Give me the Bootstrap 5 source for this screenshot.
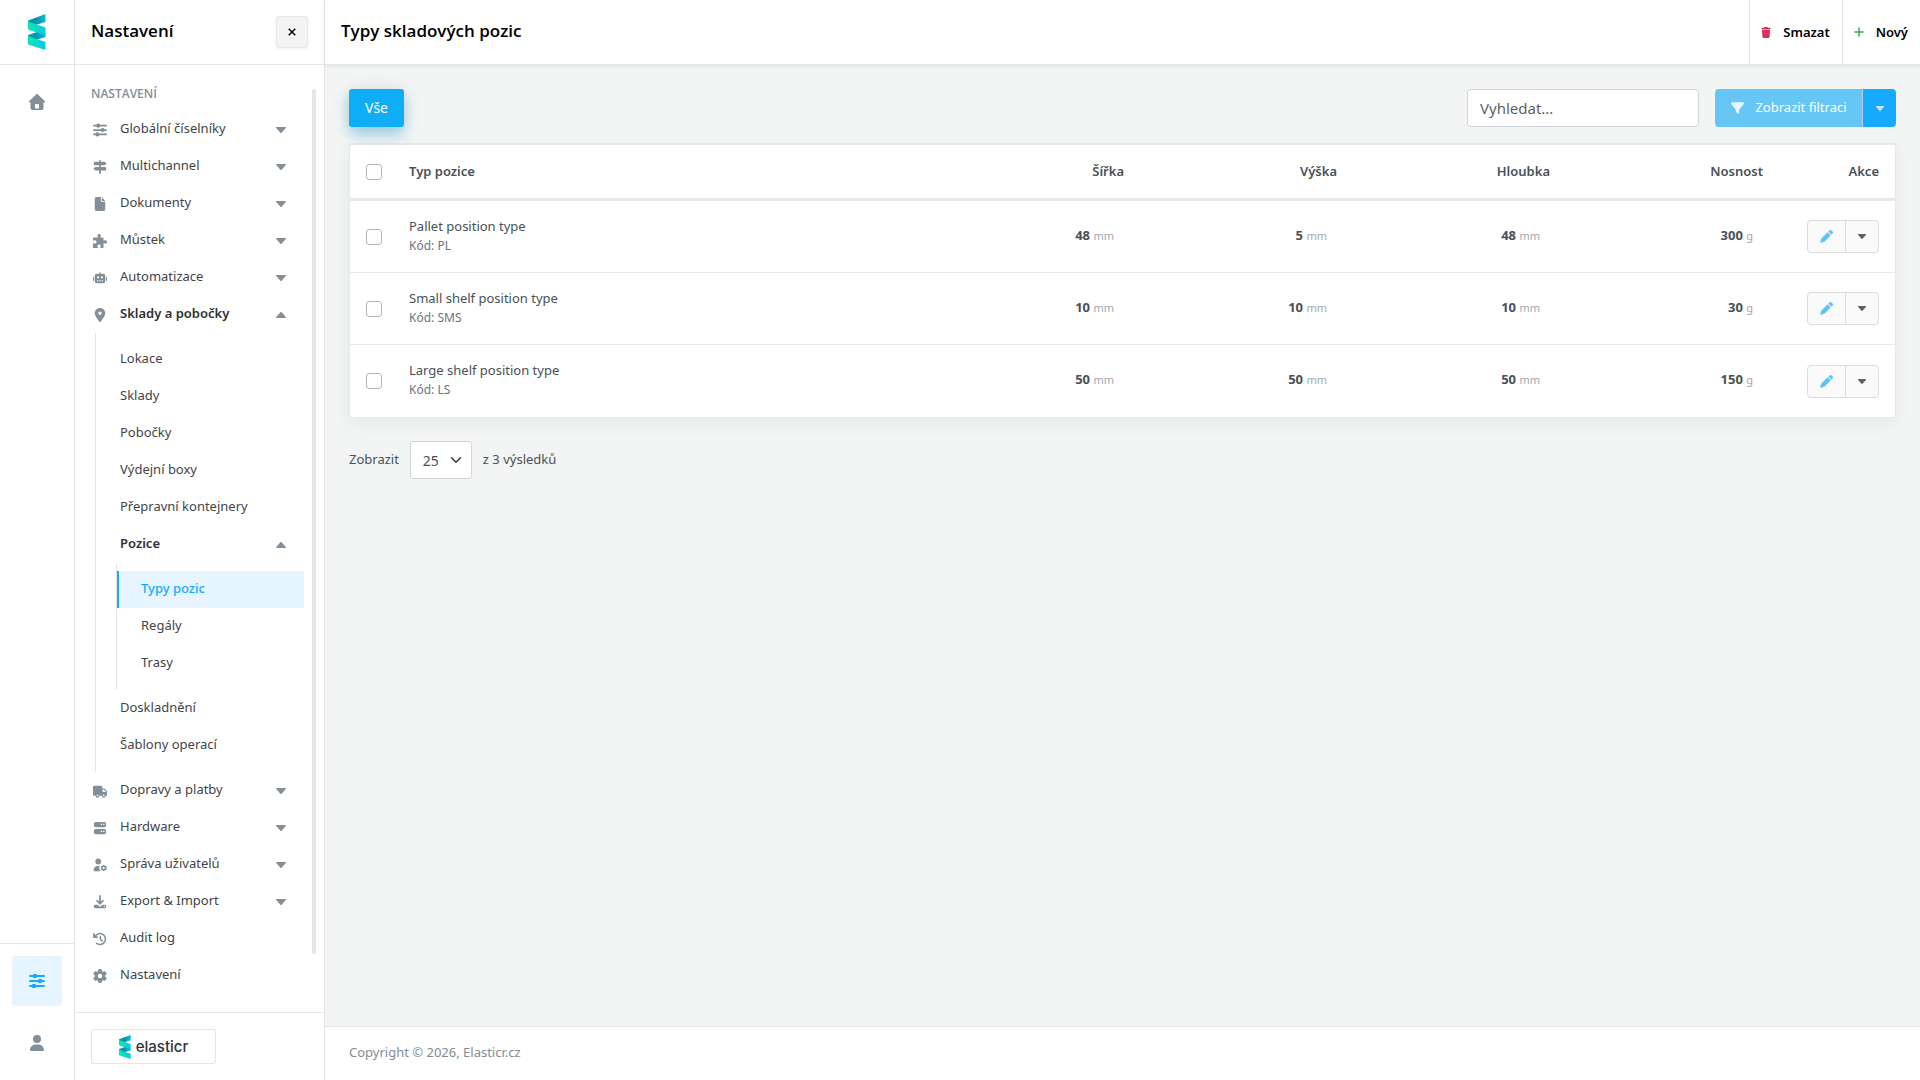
<!DOCTYPE html>
<html lang="cs">
<head>
<meta charset="utf-8">
<meta name="viewport" content="width=device-width, initial-scale=1">
<title>Typy skladových pozic</title>
<link href="https://cdn.jsdelivr.net/npm/bootstrap@5.3.0/dist/css/bootstrap.min.css" rel="stylesheet">
<style>
:root { --line: #e6e6e6; --icon: #828f99; --accent: #0fadf5; --soft: #e6f5ff; --ink: #3f444a; }
body { font-family: "Noto Sans", "Open Sans", sans-serif; font-size: 13px; line-height: 20px; color: #495057; background: #f3f5f4; }
a { text-decoration: none; color: inherit; }
svg { display: block; flex: none; }
.top-strip { height: 65px; flex: none; border-bottom: 1px solid var(--line); background: #fff; }
.top-title { font-family: "Open Sans", sans-serif; font-size: 17px; font-weight: 600; line-height: 24px; color: #000; margin: 0; padding-bottom: 3px; }
.rail { width: 75px; background: #fff; border-right: 1px solid var(--line); color: var(--icon); }
.rail-top { padding-top: 14px; }
.rail-link { width: 50px; height: 50px; border-radius: 3px; }
.rail-link.current { background: var(--soft); color: #16aaff; }
.rail-foot { border-top: 1px solid var(--line); height: 137px; }
.panel { width: 250px; background: #fff; border-right: 1px solid var(--line); }
.close-btn { width: 32px; height: 32px; padding: 0; background: #f4f4f4; border: 1px solid #e8e8e8; border-radius: 3px; box-shadow: 0 1px 3px rgba(0,0,0,.06); color: #000; }
.menu-head { font-family: "Open Sans", sans-serif; font-size: 12px; font-weight: 600; color: var(--icon); line-height: 20px; margin: 0; padding: 19px 0 7px 16px; }
.menu, .menu ul { list-style: none; margin: 0; padding: 0; }
.menu-row { display: flex; align-items: center; height: 37px; padding: 0 18px 3px 18px; color: var(--ink); }
.menu-row .ico { width: 14px; margin: 4px 13px 0 0; color: var(--icon); }
.menu-row .tri { margin: 4px 0 0 auto; color: var(--icon); }
.menu-row.open { font-weight: 600; color: #2c3136; }
.menu .sub-one { margin-left: 20px; padding: 8px 0; border-left: 1px solid var(--line); }
.sub-one .menu-row { padding-left: 24px; }
.menu .sub-two { margin-left: 20px; padding: 8px 0; border-left: 1px solid var(--line); }
.sub-two .menu-row.current { background: var(--soft); color: #16aaff; font-weight: 500; border-left: 2px solid #16aaff; padding-left: 22px; }
.scroll-thumb { width: 4px; background: var(--line); border-radius: 2px; margin: 24px 8px 58px 8px; }
.panel-foot { height: 68px; border-top: 1px solid var(--line); padding: 16px; }
.brand-box { width: 125px; height: 35px; border: 1px solid var(--line); border-radius: 2px; font-family: Inter, sans-serif; font-size: 15px; font-weight: 500; color: #2d333b; gap: 5px; }
.top-main { box-shadow: 0 1px 5px rgba(0,0,0,.08); padding-left: 16px; }
.top-action { border: 0; border-left: 1px solid var(--line); background: none; padding: 0 12px 0 11px; height: 64px; font-weight: 600; color: #000; gap: 12px; }
.work { padding: 24px; }
.btn-all { width: 55px; height: 38px; padding: 0; font-size: 14px; line-height: 20px; color: #fff; background: var(--accent); border: 0; border-radius: 3px; box-shadow: 0 0 20px rgba(8,10,12,.08), 0 8px 14px rgba(15,150,215,.35); }
.search-box { width: 232px; height: 38px; font-size: 15px; border-color: #ced4da; border-radius: 4px; }
.filter-group .btn { height: 38px; border: 0; border-radius: 4px; color: #fff; }
.filter-group .btn-main { width: 148px; padding: 0; font-size: 13px; background: #66c7f7; gap: 11px; }
.filter-group .btn-drop { width: 34px; padding: 0; background: #16aaff; border-left: 1px solid #b9cfdd; }
.btn-drop svg { opacity: .75; }
.grid-card { border: 1px solid #e6e9ec; border-top-width: 2px; border-bottom: 0; border-radius: 3px; box-shadow: 0 6px 18px rgba(8,10,12,.06); background: #fff; margin-top: 16px; }
.grid-card table { margin: 0; table-layout: fixed; border-collapse: separate; border-spacing: 0; --bs-table-bg: transparent; color: #495057; }
.grid-card th { height: 56px; padding: 0 16px; font-weight: 600; vertical-align: middle; border-bottom: 3px solid #e6e9ec; }
.grid-card th.label { padding-bottom: 2px; }
.grid-card td { height: 72px; padding: 0 16px; vertical-align: middle; border-bottom: 1px solid #e6e9ec; }
.grid-card tbody tr:last-child td { border-bottom: 0; }
.grid-card .form-check-input { width: 16px; height: 16px; margin: 0; display: block; border-color: #adb5bd; }
.col-check { width: 43px; }
.col-num { width: 213px; }
.col-act { width: 116px; }
.grid-card td.name { padding-bottom: 2px; }
.code { font-size: 12px; line-height: 20px; color: #6c757d; }
.grid-card td.num { padding-right: 26px; padding-bottom: 3px; font-weight: 700; }
.unit { font-size: 11px; font-weight: 400; color: #a3a8ad; }
.row-btns .btn { height: 33px; padding: 0; background: #fafafa; border-color: #dcdcdc; border-radius: 4px; }
.row-btns .btn-edit { width: 39px; color: #5cc3f7; }
.row-btns .btn-more { width: 34px; color: #5c6166; }
.pager { margin-top: 24px; gap: 11px; }
.pager label, .pager span { padding-bottom: 3px; }
.pager .form-select { width: 62px; height: 38px; padding: 0 0 0 12px; font-size: 14px; border-color: #ced4da; border-radius: 3px; color: #495057; background-position: right 8px center; background-size: 14px 12px; }
.page-foot { height: 54px; border-top: 1px solid var(--line); background: #fff; padding: 0 0 3px 24px; color: #828c95; }
</style>
<script src="https://cdn.jsdelivr.net/npm/bootstrap@5.3.0/dist/js/bootstrap.bundle.min.js" defer></script>
</head>
<body>
<svg width="0" height="0" class="position-absolute" aria-hidden="true">
  <defs>
    <linearGradient id="g-dark"><stop offset="0" stop-color="#0ba5b5"/><stop offset=".4" stop-color="#078fae"/><stop offset="1" stop-color="#0cb9dc"/></linearGradient>
    <linearGradient id="g-light"><stop offset="0" stop-color="#0de8ae"/><stop offset="1" stop-color="#0bc9e6"/></linearGradient>
    <symbol id="i-logo" viewBox="0 0 18 36">
      <path fill="url(#g-dark)" d="M0 6.500 17.500 0v8L6 11.500 0 9zM0 21 12 17l5.500 2.300v3.700L6 26.500 0 24z"/>
      <path fill="url(#g-light)" d="M0 7.500 17.500 13.500v8L0 15.500zM0 22 17.500 28v8L0 30.500z"/>
    </symbol>
    <symbol id="i-sliders" viewBox="0 0 16 16"><g fill="currentColor"><rect y="2" width="16" height="2" rx="1"/><rect y="7" width="16" height="2" rx="1"/><rect y="12" width="16" height="2" rx="1"/><circle cx="6" cy="3" r="2.300"/><circle cx="11" cy="8" r="2.300"/><circle cx="5" cy="13" r="2.300"/></g></symbol>
    <symbol id="i-sign" viewBox="0 0 16 16"><path fill="currentColor" d="M7 1a1 1 0 0 1 2 0v1h4.500L15.500 4l-2 2H2a1 1 0 0 1-1-1V3a1 1 0 0 1 1-1h5zM2.500 8H14a1 1 0 0 1 1 1v2a1 1 0 0 1-1 1H9v3a1 1 0 0 1-2 0v-3H2.500l-2-2zM7 6h2v2H7z"/></symbol>
    <symbol id="i-file" viewBox="0 0 16 16"><path fill="currentColor" d="M4 0h5v4.500a1 1 0 0 0 1 1h4V14a2 2 0 0 1-2 2H4a2 2 0 0 1-2-2V2a2 2 0 0 1 2-2zm6 0 4 4.500h-4z"/></symbol>
    <symbol id="i-puzzle" viewBox="0 0 16 16"><path fill="currentColor" d="M5.500 3.200C5 2.700 5 2.200 5 1.800 5 .8 5.900 0 7 0s2 .8 2 1.800c0 .5-.2.900-.5 1.300-.3.400-.1.900.4.900H11a1 1 0 0 1 1 1v2c0 .6.500.8 1 .5.300-.3.700-.5 1.200-.5 1 0 1.800.9 1.800 2s-.8 2-1.800 2c-.5 0-.9-.2-1.200-.5-.4-.3-1-.1-1 .5v4a1 1 0 0 1-1 1H9c-.6 0-.8-.5-.5-1 .3-.3.5-.7.500-1.200 0-1-.9-1.800-2-1.800s-2 .8-2 1.800c0 .5.200.9.500 1.200.3.500.1 1-.5 1H1a1 1 0 0 1-1-1v-4c0-.6.500-.8 1-.5.300.3.700.5 1.200.5 1 0 1.800-.9 1.800-2s-.8-2-1.800-2c-.5 0-.9.200-1.200.5-.5.300-1 .1-1-.5V5a1 1 0 0 1 1-1h4c.6 0 .8-.4.500-.8z"/></symbol>
    <symbol id="i-robot" viewBox="0 0 16 16"><path fill="currentColor" fill-rule="evenodd" d="M7.300 2a.7.700 0 0 1 1.400 0V3H11.500a2.500 2.500 0 0 1 2.500 2.500v6a2.500 2.500 0 0 1-2.500 2.500h-7A2.500 2.500 0 0 1 2 11.500v-6A2.500 2.500 0 0 1 4.500 3h2.800zM4.500 7.200a1.300 1.300 0 1 0 2.600 0 1.300 1.300 0 1 0-2.600 0zm4.400 0a1.300 1.300 0 1 0 2.600 0 1.300 1.300 0 1 0-2.600 0zM4.500 10.500v1.200h1.600v-1.200zm2.700 0v1.200h1.600v-1.200zm2.700 0v1.200h1.600v-1.200zM0 7.500A.6.600 0 0 1 1.200 7.500v3a.6.600 0 0 1-1.200 0zm14.800 0a.6.600 0 0 1 1.200 0v3a.6.600 0 0 1-1.200 0z"/></symbol>
    <symbol id="i-pin" viewBox="0 0 384 512"><path fill="currentColor" d="M215.700 499.200C267 435 384 279.400 384 192C384 86 298 0 192 0S0 86 0 192c0 87.400 117 243 168.300 307.200c12.300 15.300 35.100 15.300 47.400 0zM192 128a64 64 0 1 1 0 128 64 64 0 1 1 0-128z"/></symbol>
    <symbol id="i-truck" viewBox="0 0 16 16"><path fill="currentColor" fill-rule="evenodd" d="M1.500 2H9a1.500 1.500 0 0 1 1.500 1.500V5H12.300c.4 0 .8.200 1.100.4l2.200 2.200c.3.300.4.700.4 1.100V12.500a1 1 0 0 1-1 1h-.5a2.200 2.200 0 0 1-4.400 0H7.400a2.200 2.200 0 0 1-4.400 0H1.500A1.500 1.500 0 0 1 0 12V3.500A1.500 1.500 0 0 1 1.500 2zM11 6.300V9h3.500v-.4l-2.200-2.300zM4.300 13a.9.900 0 1 0 1.800 0 .9.900 0 1 0-1.800 0zm7.100 0a.9.900 0 1 0 1.800 0 .9.900 0 1 0-1.800 0z"/></symbol>
    <symbol id="i-server" viewBox="0 0 16 16"><path fill="currentColor" fill-rule="evenodd" d="M3 1h10a2 2 0 0 1 2 2v2a2 2 0 0 1-2 2H3a2 2 0 0 1-2-2V3a2 2 0 0 1 2-2zm6 2.200v1.500h1.500V3.200zm2.700 0v1.500h1.500V3.200zM3 9h10a2 2 0 0 1 2 2v2a2 2 0 0 1-2 2H3a2 2 0 0 1-2-2v-2a2 2 0 0 1 2-2zm6 2.200v1.500h1.500v-1.500zm2.700 0v1.500h1.500v-1.500z"/></symbol>
    <symbol id="i-gear" viewBox="0 0 512 512"><path fill="currentColor" d="M495.900 166.600c3.200 8.700 .5 18.400-6.400 24.600l-43.300 39.400c1.100 8.300 1.700 16.800 1.700 25.400s-.6 17.100-1.700 25.400l43.300 39.400c6.900 6.200 9.600 15.900 6.400 24.600c-4.400 11.900-9.700 23.300-15.800 34.300l-4.700 8.100c-6.600 11-14 21.400-22.100 31.200c-5.900 7.200-15.700 9.600-24.500 6.800l-55.700-17.700c-13.400 10.300-28.200 18.900-44 25.400l-12.500 57.100c-2 9.100-9 16.300-18.200 17.800c-13.800 2.300-28 3.500-42.500 3.500s-28.700-1.200-42.500-3.500c-9.200-1.500-16.200-8.700-18.200-17.800l-12.500-57.100c-15.800-6.500-30.600-15.100-44-25.400L83.100 425.900c-8.800 2.800-18.600 .3-24.500-6.800c-8.100-9.800-15.500-20.200-22.100-31.200l-4.700-8.100c-6.100-11-11.400-22.400-15.800-34.300c-3.200-8.700-.5-18.400 6.400-24.600l43.300-39.400C64.600 273.100 64 264.600 64 256s.6-17.100 1.700-25.400L22.400 191.200c-6.900-6.200-9.600-15.900-6.400-24.600c4.400-11.900 9.700-23.300 15.800-34.300l4.700-8.100c6.600-11 14-21.400 22.100-31.200c5.900-7.200 15.700-9.600 24.500-6.800l55.700 17.700c13.400-10.300 28.200-18.900 44-25.400l12.500-57.100c2-9.100 9-16.300 18.200-17.800C227.300 1.200 241.500 0 256 0s28.700 1.200 42.500 3.500c9.200 1.500 16.200 8.700 18.200 17.800l12.500 57.100c15.800 6.500 30.600 15.100 44 25.400l55.700-17.700c8.800-2.800 18.600-.3 24.500 6.800c8.100 9.800 15.500 20.200 22.100 31.200l4.700 8.100c6.100 11 11.400 22.400 15.800 34.300zM256 336a80 80 0 1 0 0-160 80 80 0 1 0 0 160z"/></symbol>
    <symbol id="i-usergear" viewBox="0 0 16 16"><g fill="currentColor"><circle cx="6" cy="4" r="3.300"/><path d="M5 9h2.500c-.5 1.500-.4 3.500 1 6H1.500a.8.800 0 0 1-.8-.8C.7 11 2.700 9 5 9z"/></g><use href="#i-gear" x="8.500" y="7.500" width="7.500" height="8"/></symbol>
    <symbol id="i-download" viewBox="0 0 16 16"><path fill="currentColor" fill-rule="evenodd" d="M7 1a1 1 0 0 1 2 0v6.600l2.300-2.300 1.400 1.400L8 11.400 3.300 6.700l1.400-1.400L7 7.600zM2.500 11h2.700L8 13.500 10.800 11h2.700A1.500 1.500 0 0 1 15 12.500v1a1.500 1.500 0 0 1-1.500 1.500h-11A1.500 1.500 0 0 1 1 13.500v-1A1.500 1.500 0 0 1 2.500 11zm9.800 1.400v1.300h1.300v-1.300z"/></symbol>
    <symbol id="i-history" viewBox="0 0 16 16"><g fill="none" stroke="currentColor" stroke-width="1.700" stroke-linecap="round" stroke-linejoin="round"><path d="M2.500 5.200A6.200 6.200 0 1 1 4 12.800"/><path d="M1 2v4h4" fill="currentColor"/><path d="M8.500 5v3.300l2 2"/></g></symbol>
    <symbol id="i-house" viewBox="0 0 16 16"><path fill="currentColor" fill-rule="evenodd" d="M7.300.3a1 1 0 0 1 1.400 0l7 6.700c.6.600.2 1.500-.6 1.500h-.6V14a2 2 0 0 1-2 2h-9a2 2 0 0 1-2-2V8.500H.9c-.8 0-1.200-.9-.6-1.500zM6 14.500h4V11a1 1 0 0 0-1-1H7a1 1 0 0 0-1 1z"/></symbol>
    <symbol id="i-user" viewBox="0 0 448 512"><path fill="currentColor" d="M224 256A128 128 0 1 0 224 0a128 128 0 1 0 0 256zm-45.700 48C79.800 304 0 383.800 0 482.300C0 498.700 13.300 512 29.700 512H418.300c16.400 0 29.700-13.300 29.700-29.700C448 383.800 368.200 304 269.700 304H178.300z"/></symbol>
    <symbol id="i-down" viewBox="0 0 10 6"><path fill="currentColor" d="M.6 0h8.800c.6 0 .8.600.4 1L5.600 5.700a.8.800 0 0 1-1.200 0L.2 1C-.2.600 0 0 .6 0z"/></symbol>
    <symbol id="i-up" viewBox="0 0 10 6"><path fill="currentColor" d="M.6 6h8.800c.6 0 .8-.6.400-1L5.600.3a.8.800 0 0 0-1.200 0L.2 5C-.2 5.400 0 6 .6 6z"/></symbol>
    <symbol id="i-filter" viewBox="0 0 512 512"><path fill="currentColor" d="M3.900 54.900C10.500 40.900 24.500 32 40 32H472c15.500 0 29.500 8.900 36.100 22.900s4.600 30.500-5.200 42.500L320 320.900V448c0 12.100-6.800 23.200-17.700 28.600s-23.800 4.300-33.500-3l-64-48c-8.100-6-12.800-15.500-12.800-25.600V320.900L9 97.300C-.7 85.400-2.800 68.800 3.900 54.900z"/></symbol>
    <symbol id="i-pencil" viewBox="0 0 16 16"><path fill="currentColor" d="M9.300 2.900l3.800 3.800-7.300 7.300c-.3.300-.6.500-1 .6L0 16l1.400-4.800c.1-.4.300-.7.600-1zM10.200 2l1.500-1.500a1.800 1.800 0 0 1 2.500 0l1.300 1.300a1.800 1.800 0 0 1 0 2.500L14 5.800z"/></symbol>
    <symbol id="i-trash" viewBox="0 0 10 11"><path fill="currentColor" d="M3.500 0h3l.5.700h2.500v1.200H.5V.7H3zM1 2.400h8l-.4 7.400c0 .7-.5 1.200-1.200 1.200H2.600c-.7 0-1.200-.5-1.200-1.200z"/></symbol>
  </defs>
</svg>

<div class="d-flex min-vh-100">
  <nav class="rail d-flex flex-column flex-shrink-0" aria-label="Hlavní">
    <a href="#" class="top-strip rail-top d-flex justify-content-center" aria-label="Elasticr"><svg width="18" height="36"><use href="#i-logo"/></svg></a>
    <div class="d-flex justify-content-center pt-2 mt-1">
      <a href="#" class="rail-link d-flex align-items-center justify-content-center" aria-label="Domů"><svg width="16" height="16"><use href="#i-house"/></svg></a>
    </div>
    <div class="rail-foot mt-auto d-flex flex-column align-items-center pt-2 gap-2">
      <a href="#" class="rail-link current d-flex align-items-center justify-content-center mt-1" aria-label="Nastavení"><svg width="16" height="16"><use href="#i-sliders"/></svg></a>
      <a href="#" class="rail-link d-flex align-items-center justify-content-center mt-1" aria-label="Uživatel"><svg width="14" height="16"><use href="#i-user"/></svg></a>
    </div>
  </nav>

  <aside class="panel d-flex flex-column flex-shrink-0">
    <div class="top-strip d-flex align-items-center justify-content-between px-3">
      <h2 class="top-title">Nastavení</h2>
      <button type="button" class="close-btn d-flex align-items-center justify-content-center" aria-label="Zavřít"><svg width="8" height="8" viewBox="0 0 8 8"><path d="M.7.7l6.600 6.600M7.300.7L.7 7.300" stroke="currentColor" stroke-width="1.400"/></svg></button>
    </div>
    <div class="d-flex flex-grow-1">
      <div class="flex-grow-1">
        <h3 class="menu-head">NASTAVENÍ</h3>
        <ul class="menu">
          <li><a href="#" class="menu-row"><svg class="ico" height="14"><use href="#i-sliders"/></svg>Globální číselníky<svg class="tri" width="10" height="6"><use href="#i-down"/></svg></a></li>
          <li><a href="#" class="menu-row"><svg class="ico" height="14"><use href="#i-sign"/></svg>Multichannel<svg class="tri" width="10" height="6"><use href="#i-down"/></svg></a></li>
          <li><a href="#" class="menu-row"><svg class="ico" height="14"><use href="#i-file"/></svg>Dokumenty<svg class="tri" width="10" height="6"><use href="#i-down"/></svg></a></li>
          <li><a href="#" class="menu-row"><svg class="ico" height="14"><use href="#i-puzzle"/></svg>Můstek<svg class="tri" width="10" height="6"><use href="#i-down"/></svg></a></li>
          <li><a href="#" class="menu-row"><svg class="ico" height="14"><use href="#i-robot"/></svg>Automatizace<svg class="tri" width="10" height="6"><use href="#i-down"/></svg></a></li>
          <li><a href="#" class="menu-row open"><svg class="ico" height="14"><use href="#i-pin"/></svg>Sklady a pobočky<svg class="tri" width="10" height="6"><use href="#i-up"/></svg></a>
            <ul class="sub-one">
              <li><a href="#" class="menu-row">Lokace</a></li>
              <li><a href="#" class="menu-row">Sklady</a></li>
              <li><a href="#" class="menu-row">Pobočky</a></li>
              <li><a href="#" class="menu-row">Výdejní boxy</a></li>
              <li><a href="#" class="menu-row">Přepravní kontejnery</a></li>
              <li><a href="#" class="menu-row open">Pozice<svg class="tri" width="10" height="6"><use href="#i-up"/></svg></a>
                <ul class="sub-two">
                  <li><a href="#" class="menu-row current" aria-current="page">Typy pozic</a></li>
                  <li><a href="#" class="menu-row">Regály</a></li>
                  <li><a href="#" class="menu-row">Trasy</a></li>
                </ul>
              </li>
              <li><a href="#" class="menu-row">Doskladnění</a></li>
              <li><a href="#" class="menu-row">Šablony operací</a></li>
            </ul>
          </li>
          <li><a href="#" class="menu-row"><svg class="ico" height="14"><use href="#i-truck"/></svg>Dopravy a platby<svg class="tri" width="10" height="6"><use href="#i-down"/></svg></a></li>
          <li><a href="#" class="menu-row"><svg class="ico" height="14"><use href="#i-server"/></svg>Hardware<svg class="tri" width="10" height="6"><use href="#i-down"/></svg></a></li>
          <li><a href="#" class="menu-row"><svg class="ico" height="14"><use href="#i-usergear"/></svg>Správa uživatelů<svg class="tri" width="10" height="6"><use href="#i-down"/></svg></a></li>
          <li><a href="#" class="menu-row"><svg class="ico" height="14"><use href="#i-download"/></svg>Export &amp; Import<svg class="tri" width="10" height="6"><use href="#i-down"/></svg></a></li>
          <li><a href="#" class="menu-row"><svg class="ico" height="14"><use href="#i-history"/></svg>Audit log</a></li>
          <li><a href="#" class="menu-row"><svg class="ico" height="14"><use href="#i-gear"/></svg>Nastavení</a></li>
        </ul>
      </div>
      <div class="scroll-thumb flex-shrink-0"></div>
    </div>
    <div class="panel-foot">
      <a href="#" class="brand-box d-flex align-items-center justify-content-center"><svg width="12" height="24"><use href="#i-logo"/></svg><span>elasticr</span></a>
    </div>
  </aside>

  <div class="d-flex flex-column flex-grow-1">
    <header class="top-strip top-main d-flex align-items-center">
      <h1 class="top-title me-auto">Typy skladových pozic</h1>
      <button type="button" class="top-action d-flex align-items-center"><svg width="10" height="11" color="#dc3058"><use href="#i-trash"/></svg>Smazat</button>
      <button type="button" class="top-action d-flex align-items-center"><svg width="10" height="10" viewBox="0 0 10 10" color="#3fa648"><path d="M5 .5v9M.5 5h9" stroke="currentColor" stroke-width="1.500"/></svg>Nový</button>
    </header>
    <main class="work flex-grow-1">
      <div class="d-flex align-items-center gap-3">
        <button type="button" class="btn btn-all me-auto">Vše</button>
        <input type="search" class="form-control search-box" placeholder="Vyhledat..." aria-label="Vyhledat">
        <div class="btn-group filter-group">
          <button type="button" class="btn btn-main d-flex align-items-center justify-content-center"><svg width="13" height="14" opacity=".85"><use href="#i-filter"/></svg>Zobrazit filtraci</button>
          <button type="button" class="btn btn-drop d-flex align-items-center justify-content-center" aria-label="Další možnosti"><svg width="8" height="5"><use href="#i-down"/></svg></button>
        </div>
      </div>
      <div class="grid-card">
        <table class="table">
          <colgroup><col class="col-check"><col><col class="col-num"><col class="col-num"><col class="col-num"><col class="col-num"><col class="col-act"></colgroup>
          <thead>
            <tr><th><input class="form-check-input" type="checkbox" aria-label="Vybrat vše"></th><th class="label">Typ pozice</th><th class="label text-end">Šířka</th><th class="label text-end">Výška</th><th class="label text-end">Hloubka</th><th class="label text-end">Nosnost</th><th class="label text-end">Akce</th></tr>
          </thead>
          <tbody>
            <tr><td><input class="form-check-input" type="checkbox" aria-label="Vybrat Pallet position type"></td><td class="name"><div>Pallet position type</div><div class="code">Kód: PL</div></td><td class="num text-end">48 <span class="unit">mm</span></td><td class="num text-end">5 <span class="unit">mm</span></td><td class="num text-end">48 <span class="unit">mm</span></td><td class="num text-end">300 <span class="unit">g</span></td>
              <td class="text-end"><div class="btn-group row-btns"><button type="button" class="btn btn-edit d-flex align-items-center justify-content-center" aria-label="Upravit"><svg width="13" height="13"><use href="#i-pencil"/></svg></button><button type="button" class="btn btn-more d-flex align-items-center justify-content-center" aria-label="Další akce"><svg width="8" height="5"><use href="#i-down"/></svg></button></div></td></tr>
            <tr><td><input class="form-check-input" type="checkbox" aria-label="Vybrat Small shelf position type"></td><td class="name"><div>Small shelf position type</div><div class="code">Kód: SMS</div></td><td class="num text-end">10 <span class="unit">mm</span></td><td class="num text-end">10 <span class="unit">mm</span></td><td class="num text-end">10 <span class="unit">mm</span></td><td class="num text-end">30 <span class="unit">g</span></td>
              <td class="text-end"><div class="btn-group row-btns"><button type="button" class="btn btn-edit d-flex align-items-center justify-content-center" aria-label="Upravit"><svg width="13" height="13"><use href="#i-pencil"/></svg></button><button type="button" class="btn btn-more d-flex align-items-center justify-content-center" aria-label="Další akce"><svg width="8" height="5"><use href="#i-down"/></svg></button></div></td></tr>
            <tr><td><input class="form-check-input" type="checkbox" aria-label="Vybrat Large shelf position type"></td><td class="name"><div>Large shelf position type</div><div class="code">Kód: LS</div></td><td class="num text-end">50 <span class="unit">mm</span></td><td class="num text-end">50 <span class="unit">mm</span></td><td class="num text-end">50 <span class="unit">mm</span></td><td class="num text-end">150 <span class="unit">g</span></td>
              <td class="text-end"><div class="btn-group row-btns"><button type="button" class="btn btn-edit d-flex align-items-center justify-content-center" aria-label="Upravit"><svg width="13" height="13"><use href="#i-pencil"/></svg></button><button type="button" class="btn btn-more d-flex align-items-center justify-content-center" aria-label="Další akce"><svg width="8" height="5"><use href="#i-down"/></svg></button></div></td></tr>
          </tbody>
        </table>
      </div>
      <div class="pager d-flex align-items-center">
        <label for="per-page">Zobrazit</label>
        <select id="per-page" class="form-select"><option>25</option><option>50</option><option>100</option></select>
        <span>z 3 výsledků</span>
      </div>
    </main>
    <footer class="page-foot d-flex align-items-center">Copyright © 2026, Elasticr.cz</footer>
  </div>
</div>
</body>
</html>
